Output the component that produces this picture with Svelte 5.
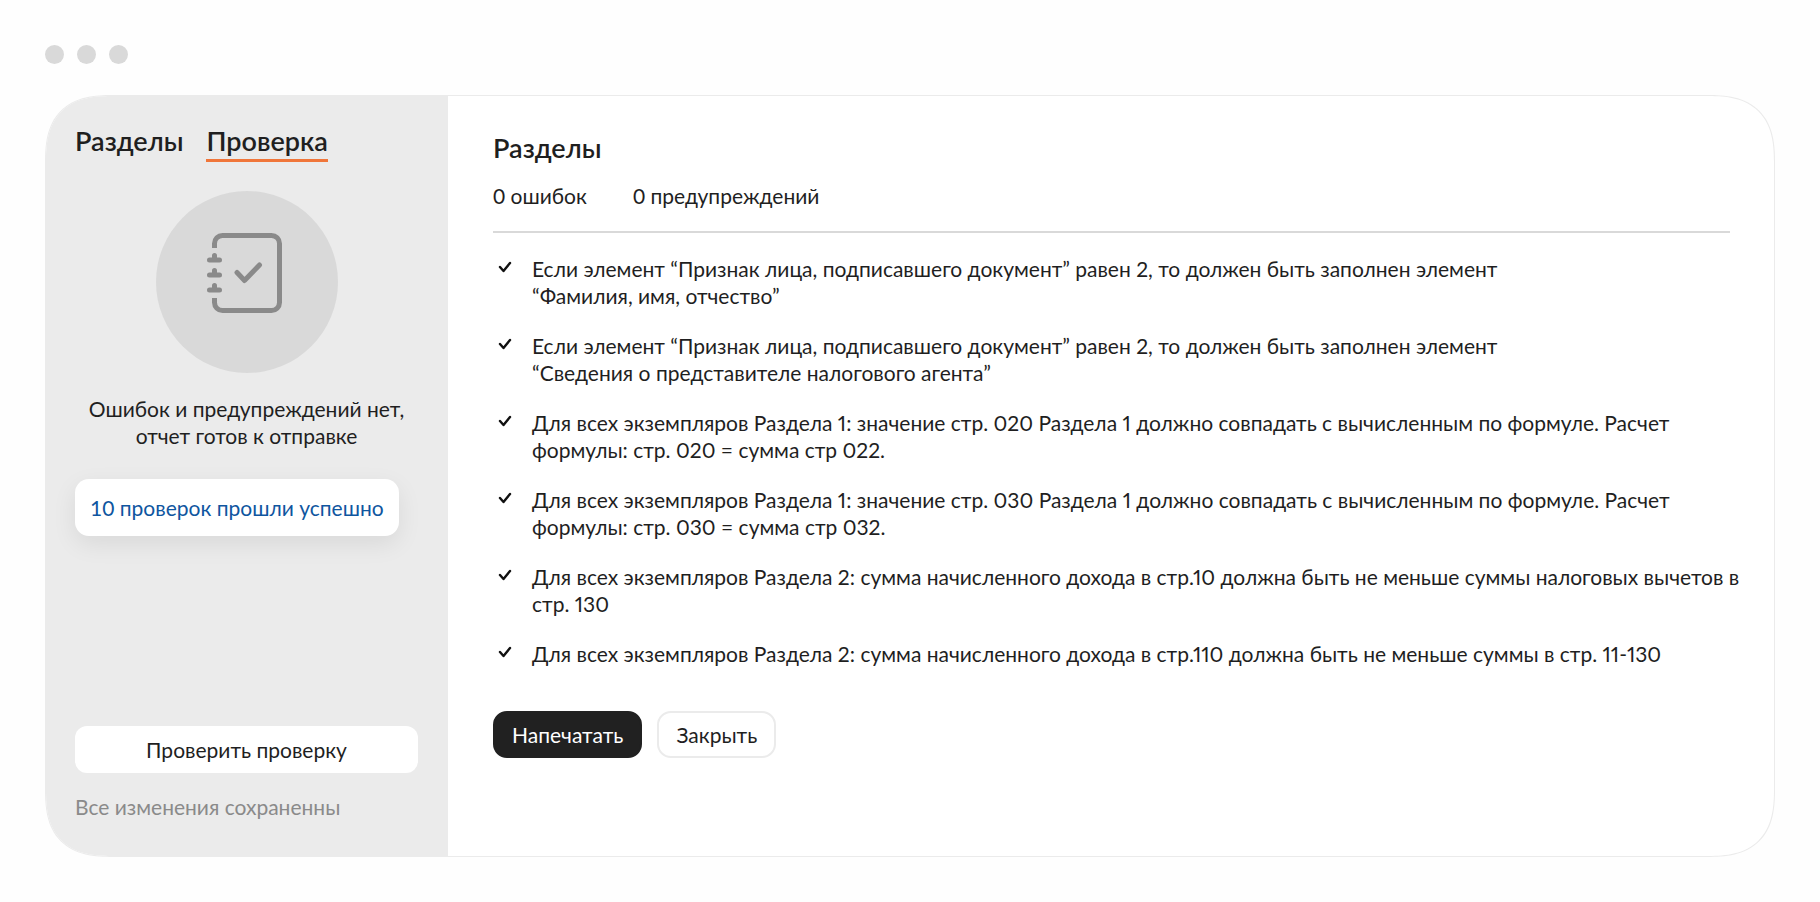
<script lang="ts">
  const dots = [1, 2, 3];

  const checks = [
    'Если элемент “Признак лица, подписавшего документ” равен 2, то должен быть заполнен элемент\n“Фамилия, имя, отчество”',
    'Если элемент “Признак лица, подписавшего документ” равен 2, то должен быть заполнен элемент\n“Сведения о представителе налогового агента”',
    'Для всех экземпляров Раздела 1: значение стр. 020 Раздела 1 должно совпадать с вычисленным по формуле. Расчет\nформулы: стр. 020 = сумма стр 022.',
    'Для всех экземпляров Раздела 1: значение стр. 030 Раздела 1 должно совпадать с вычисленным по формуле. Расчет\nформулы: стр. 030 = сумма стр 032.',
    'Для всех экземпляров Раздела 2: сумма начисленного дохода в стр.10 должна быть не меньше суммы налоговых вычетов в\nстр. 130',
    'Для всех экземпляров Раздела 2: сумма начисленного дохода в стр.110 должна быть не меньше суммы в стр. 11-130'
  ];

  let tab = $state('check');
</script>

<div class="page">
  <div class="dots">
    {#each dots as dot (dot)}
      <span class="dot"></span>
    {/each}
  </div>

  <div class="window">
    <aside class="sidebar">
      <nav class="tabs">
        <button class="tab" class:active={tab === 'sections'} onclick={() => (tab = 'sections')}>Разделы</button>
        <button class="tab" class:active={tab === 'check'} onclick={() => (tab = 'check')}>Проверка</button>
      </nav>

      <div class="badge">
        <svg width="76" height="80" viewBox="0 0 76 80" fill="none" stroke="#8a8a8a" stroke-width="5" aria-hidden="true">
          <path d="M7.500 15V10.500a8 8 0 0 1 8-8h49a8 8 0 0 1 8 8v59a8 8 0 0 1-8 8h-49a8 8 0 0 1-8-8V65" />
          <path d="M2.500 27h10M7.500 27v-4.500M2.500 42h10M7.500 42v-4.500M2.500 57h10M7.500 57v-4.500" stroke-linecap="round" />
          <path d="M30 39.500l7.500 8 15-15.500" stroke-linecap="round" stroke-linejoin="round" />
        </svg>
      </div>

      <p class="summary">Ошибок и предупреждений нет,<br />отчет готов к отправке</p>

      <a class="passed" href="#checks">10 проверок прошли успешно</a>

      <button class="recheck">Проверить проверку</button>
      <p class="saved">Все изменения сохраненны</p>
    </aside>

    <main class="content">
      <h1>Разделы</h1>
      <div class="stats">
        <span>0 ошибок</span>
        <span>0 предупреждений</span>
      </div>

      <ul class="checks" id="checks">
        {#each checks as check}
          <li>
            <svg class="tick" width="14" height="12" viewBox="0 0 14 12" fill="none" stroke="#111" stroke-width="2.400" stroke-linecap="round" stroke-linejoin="round" aria-hidden="true">
              <path d="M2 6l3.500 4L12 2" />
            </svg>
            <span class="check-text">{check}</span>
          </li>
        {/each}
      </ul>

      <div class="actions">
        <button class="print">Напечатать</button>
        <button class="close">Закрыть</button>
      </div>
    </main>
  </div>
</div>

<style>
  :global(body) {
    background: #fefefe;
  }
  .page {
    box-sizing: border-box;
    min-height: 100vh;
    padding: 45px;
    display: flex;
    flex-direction: column;
    gap: 31px;
    font-family: Lato, 'Open Sans', sans-serif;
    font-size: 21px;
    line-height: 27px;
    color: #1f1f1f;
  }
  button {
    font: inherit;
    color: inherit;
    border: none;
    cursor: pointer;
  }
  p,
  h1,
  ul {
    margin: 0;
    padding: 0;
  }
  .dots {
    display: flex;
    gap: 13px;
  }
  .dot {
    width: 19px;
    height: 19px;
    border-radius: 50%;
    background: #d9d9d9;
  }
  .window {
    flex: 1;
    display: flex;
    border: 1px solid #ebebeb;
    border-radius: 68px;
    corner-shape: superellipse(1.4);
    background: white;
    overflow: hidden;
  }
  .sidebar {
    box-sizing: border-box;
    flex: 0 0 402px;
    display: flex;
    flex-direction: column;
    padding: 30px 30px 36px 29px;
    background: #ebebeb;
  }
  .tabs {
    display: flex;
    gap: 23px;
  }
  .tab {
    padding: 0 0 3px;
    border-bottom: 3px solid transparent;
    background: none;
    font-size: 27px;
    font-weight: 600;
    line-height: 30px;
  }
  .tab.active {
    border-color: #f0763a;
  }
  .badge {
    align-self: center;
    width: 182px;
    height: 182px;
    margin-top: 29px;
    display: flex;
    align-items: center;
    justify-content: center;
    padding: 0 4px 18px 0;
    box-sizing: border-box;
    border-radius: 50%;
    background: #d9d9d9;
  }
  .summary {
    margin-top: 22px;
    text-align: center;
  }
  .passed {
    align-self: flex-start;
    margin-top: 30px;
    padding: 15px;
    border-radius: 14px;
    background: white;
    box-shadow: 0 8px 24px rgba(0, 0, 0, 0.08);
    color: #0f56a0;
    text-decoration: none;
  }
  .recheck {
    margin-top: auto;
    padding: 10px;
    border-radius: 12px;
    background: white;
  }
  .saved {
    margin-top: 20px;
    color: #8a8a8a;
  }
  .content {
    flex: 1;
    padding: 37px 44px 39px 45px;
  }
  h1 {
    font-size: 27px;
    font-weight: 600;
    line-height: 30px;
  }
  .stats {
    display: flex;
    gap: 46px;
    padding: 19px 0 22px;
    border-bottom: 2px solid #d9d9d9;
  }
  .checks {
    display: flex;
    flex-direction: column;
    gap: 23px;
    margin: 22px -20px 0 0;
    list-style: none;
    font-variant-numeric: proportional-nums;
  }
  .checks li {
    display: flex;
    gap: 20px;
    padding-left: 5px;
  }
  .tick {
    flex: none;
    margin-top: 6px;
  }
  .check-text {
    white-space: pre-line;
  }
  .actions {
    display: flex;
    gap: 15px;
    margin-top: 44px;
  }
  .actions button {
    padding: 8px 17px;
    border: 2px solid #ebebeb;
    border-radius: 14px;
    background: white;
  }
  .actions .print {
    border-color: #212121;
    background: #212121;
    color: white;
  }
</style>
